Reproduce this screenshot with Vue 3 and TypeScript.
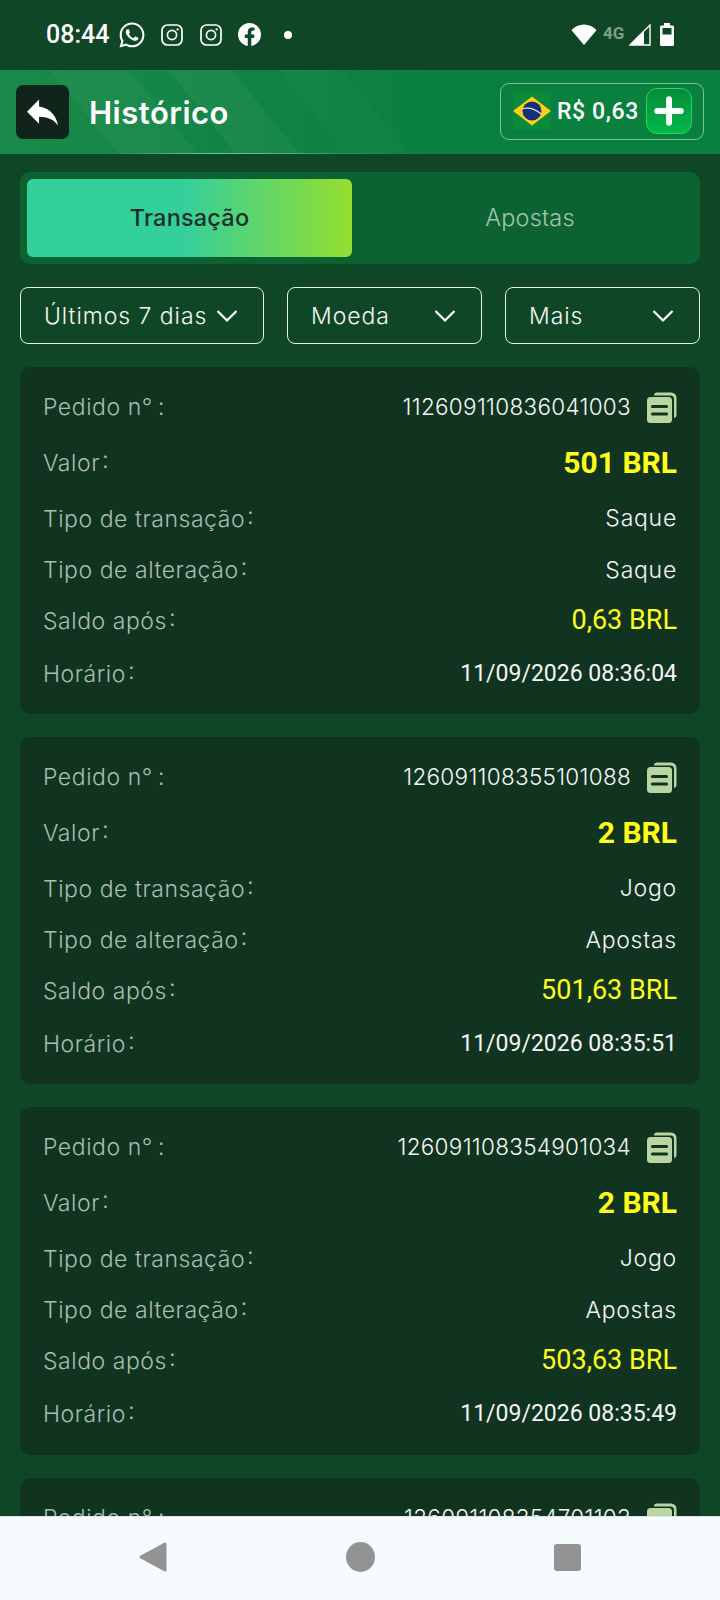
<template>
  <div class="screen">
    <div class="status-bar">
      <span class="clock">08:44</span>
      <svg class="st-icon wa" viewBox="0 0 24 24"><path d="M12.04 2C6.58 2 2.13 6.45 2.13 11.91C2.13 13.66 2.59 15.36 3.45 16.86L2.05 22L7.3 20.62C8.75 21.41 10.38 21.83 12.04 21.83C17.5 21.83 21.95 17.38 21.95 11.92C21.95 9.27 20.92 6.78 19.05 4.91C17.18 3.03 14.69 2 12.04 2M12.05 3.67C14.25 3.67 16.31 4.53 17.87 6.09C19.42 7.65 20.28 9.72 20.28 11.92C20.28 16.46 16.58 20.15 12.04 20.15C10.56 20.15 9.11 19.76 7.85 19L7.55 18.83L4.43 19.65L5.26 16.61L5.06 16.29C4.24 15 3.8 13.47 3.8 11.91C3.81 7.37 7.5 3.67 12.05 3.67M8.53 7.33C8.37 7.33 8.1 7.39 7.87 7.64C7.65 7.89 7 8.5 7 9.71C7 10.93 7.89 12.1 8 12.27C8.14 12.44 9.76 14.94 12.25 16C12.84 16.27 13.3 16.42 13.66 16.53C14.25 16.72 14.79 16.69 15.22 16.63C15.7 16.56 16.68 16.03 16.89 15.45C17.1 14.87 17.1 14.38 17.04 14.27C16.97 14.17 16.81 14.11 16.56 14C16.31 13.86 15.09 13.26 14.87 13.18C14.64 13.1 14.5 13.06 14.31 13.3C14.15 13.55 13.67 14.11 13.53 14.27C13.38 14.44 13.24 14.46 13 14.34C12.74 14.21 11.94 13.95 11 13.11C10.26 12.45 9.77 11.64 9.62 11.39C9.5 11.15 9.61 11 9.73 10.89C9.84 10.78 10 10.6 10.1 10.45C10.23 10.31 10.27 10.2 10.35 10.04C10.43 9.87 10.39 9.73 10.33 9.61C10.27 9.5 9.77 8.26 9.56 7.77C9.36 7.29 9.16 7.35 9 7.34C8.86 7.34 8.7 7.33 8.53 7.33Z" fill="#fff" /></svg>
      <svg v-for="n in 2" :key="n" class="st-icon ig" viewBox="0 0 22 22" fill="none" stroke="#fff" stroke-width="1.7">
        <rect x="1" y="1" width="20" height="20" rx="5.5" />
        <circle cx="11" cy="11" r="4.6" />
        <circle cx="16.6" cy="5.4" r="1.1" fill="#fff" stroke="none" />
      </svg>
      <svg class="st-icon fb" viewBox="2 2 20 20"><path d="M12 2.04C6.5 2.04 2 6.53 2 12.06C2 17.06 5.66 21.21 10.44 21.96V14.96H7.9V12.06H10.44V9.85C10.44 7.34 11.93 5.96 14.22 5.96C15.31 5.96 16.45 6.15 16.45 6.15V8.62H15.19C13.95 8.62 13.56 9.39 13.56 10.18V12.06H16.34L15.89 14.96H13.56V21.96A10 10 0 0 0 22 12.06C22 6.53 17.5 2.04 12 2.04Z" fill="#fff" /></svg>
      <span class="st-dot"></span>
      <div class="st-right">
        <svg class="wifi" viewBox="0 0 26 21"><path d="M13 21L0.5 6.2C3.8 2.6 8.2 0.5 13 0.5s9.2 2.1 12.5 5.7Z" fill="#fff" /></svg>
        <span class="net">4G</span>
        <svg class="signal" viewBox="0 0 22 22"><path d="M21 1V21H1Z" fill="none" stroke="#fff" stroke-width="1.4" /><path d="M15 7.5V21H1.5Z" fill="#fff" /></svg>
        <svg class="battery" viewBox="0 0 14 23"><path d="M4 0h6v2.5h2.5a1.5 1.5 0 0 1 1.5 1.5v17.5a1.5 1.5 0 0 1-1.5 1.5h-11A1.5 1.5 0 0 1 0 21.500V4a1.500 1.500 0 0 1 1.500-1.500H4Z" fill="#fff" /><rect x="2.500" y="5" width="9" height="6.500" fill="#0f4726" /></svg>
      </div>
    </div>

    <header class="top-bar">
      <button class="back-btn" type="button">
        <svg viewBox="3 5 18 15"><path d="M10,9V5L3,12L10,19V14.9C15,14.9 18.5,16.5 21,20C20,15 17,10 10,9Z" fill="#fff" /></svg>
      </button>
      <h1>Histórico</h1>
      <div class="balance">
        <svg class="flag" viewBox="0 0 38 38">
          <rect width="38" height="38" fill="#0a8a3a" />
          <path d="M19 4.500L38 19L19 33.500L0 19Z" fill="#fcd116" />
          <circle cx="19" cy="19" r="9.500" fill="#17307e" />
          <path d="M10 16.500C16 15.500 23 17.500 28 22" fill="none" stroke="#d8e2ea" stroke-width="1.200" />
        </svg>
        <span class="balance-text">R$ 0,63</span>
        <button class="plus-btn" type="button">
          <svg viewBox="0 0 28 28"><path d="M14 3V25M3 14H25" stroke="#fff" stroke-width="5.500" stroke-linecap="round" /></svg>
        </button>
      </div>
    </header>

    <main class="content">
      <div class="tabs">
        <div class="tab active">Transação</div>
        <div class="tab idle">Apostas</div>
      </div>

      <div class="filters">
        <div v-for="f in filters" :key="f.label" class="filter" :class="f.cls">
          <span>{{ f.label }}</span>
          <svg viewBox="0 0 22 14" fill="none"><path d="M1.500 2L11 11.500L20.500 2" stroke="#fff" stroke-width="2.200" /></svg>
        </div>
      </div>

      <div class="list">
        <div v-for="item in transactions" :key="item.order" class="card">
          <div class="row">
            <span class="label">Pedido n°<i class="colon low">:</i></span>
            <span class="value order">
              {{ item.order }}
              <svg class="copy" viewBox="0 0 30 31">
                <path d="M7 3.500A3 3 0 0 1 10 .5h14a5.500 5.500 0 0 1 5.500 5.500v17a3 3 0 0 1-2.500 3V7a3.500 3.500 0 0 0-3.500-3.500Z" fill="#b9d6a2" />
                <rect x="0" y="5" width="25" height="26" rx="3.500" fill="#b9d6a2" />
                <path d="M5.500 14.500h14M5.500 22h14" stroke="#103420" stroke-width="3.200" stroke-linecap="round" />
              </svg>
            </span>
          </div>
          <div class="row">
            <span class="label">Valor<i class="colon">:</i></span>
            <span class="amount">{{ item.amount }}</span>
          </div>
          <div class="row">
            <span class="label">Tipo de transação<i class="colon">:</i></span>
            <span class="value">{{ item.type }}</span>
          </div>
          <div class="row">
            <span class="label">Tipo de alteração<i class="colon">:</i></span>
            <span class="value">{{ item.change }}</span>
          </div>
          <div class="row">
            <span class="label">Saldo após<i class="colon">:</i></span>
            <span class="balance-after">{{ item.after }}</span>
          </div>
          <div class="row">
            <span class="label">Horário<i class="colon">:</i></span>
            <span class="time">{{ item.time }}</span>
          </div>
        </div>
      </div>
    </main>

    <nav class="nav-bar">
      <svg class="nav-back" viewBox="0 0 28 30"><path d="M26 2V28L2 15Z" fill="#939393" stroke="#939393" stroke-width="3" stroke-linejoin="round" /></svg>
      <span class="nav-home"></span>
      <span class="nav-recent"></span>
    </nav>
  </div>
</template>

<script setup lang="ts">
const filters = [
  { label: 'Últimos 7 dias', cls: 'f-date' },
  { label: 'Moeda', cls: 'f-coin' },
  { label: 'Mais', cls: 'f-more' }
]

const transactions = [
  { order: '112609110836041003', amount: '501 BRL', type: 'Saque', change: 'Saque', after: '0,63 BRL', time: '11/09/2026 08:36:04' },
  { order: '126091108355101088', amount: '2 BRL', type: 'Jogo', change: 'Apostas', after: '501,63 BRL', time: '11/09/2026 08:35:51' },
  { order: '126091108354901034', amount: '2 BRL', type: 'Jogo', change: 'Apostas', after: '503,63 BRL', time: '11/09/2026 08:35:49' },
  { order: '126091108354701103', amount: '2 BRL', type: 'Jogo', change: 'Apostas', after: '505,63 BRL', time: '11/09/2026 08:35:47' }
]
</script>

<style>
html, body {
  margin: 0;
  background: #0f4726;
}
</style>

<style scoped>
.screen {
  width: 720px;
  height: 1600px;
  display: flex;
  flex-direction: column;
  overflow: hidden;
  background: #0f4726;
  font-family: Inter, "Noto Sans", sans-serif;
}

.status-bar {
  height: 70px;
  flex: none;
  display: flex;
  align-items: center;
  padding: 0 46px 1px;
  box-sizing: border-box;
  color: #fff;
}

.clock {
  font: 500 25px Roboto, sans-serif;
  width: 64px;
}

.st-icon {
  display: block;
}

.wa {
  width: 30px;
  height: 30px;
  margin-left: 7px;
}

.ig {
  width: 22px;
  height: 22px;
  margin-left: 14px;
}

.ig + .ig {
  margin-left: 17px;
}

.fb {
  width: 23px;
  height: 23px;
  margin-left: 16px;
}

.st-dot {
  width: 8px;
  height: 8px;
  border-radius: 50%;
  background: #fff;
  margin-left: 23px;
}

.st-right {
  margin-left: auto;
  display: flex;
  align-items: center;
}

.wifi {
  width: 26px;
  height: 21px;
  margin-top: -1px;
}

.net {
  font: 700 17px Roboto, sans-serif;
  color: #7f9f8c;
  margin-left: 6px;
  width: 22px;
  margin-top: -3px;
}

.signal {
  width: 22px;
  height: 22px;
  margin-left: 4px;
}

.battery {
  width: 14px;
  height: 23px;
  margin-left: 9px;
}

.top-bar {
  height: 84px;
  flex: none;
  display: flex;
  align-items: center;
  padding: 0 16px;
  box-sizing: border-box;
  background:
    linear-gradient(90deg, transparent 15%, rgba(140, 230, 180, 0.7) 30%, transparent 55%) bottom / 100% 1px no-repeat,
    linear-gradient(51deg, transparent 0 15%, rgba(255, 255, 255, 0.035) 15% 25%, transparent 25% 30%, rgba(255, 255, 255, 0.04) 30% 38%, transparent 38% 44%, rgba(255, 255, 255, 0.02) 44% 52%, transparent 52%),
    linear-gradient(90deg, #1a8a4a 0%, #0a803f 60%, #0a803f 100%);
}

.back-btn {
  width: 53px;
  height: 54px;
  flex: none;
  padding: 0;
  border: none;
  border-radius: 7px;
  background: #10241a;
  display: flex;
  align-items: center;
  justify-content: center;
}

.back-btn svg {
  width: 31px;
  height: 29px;
}

.top-bar h1 {
  margin: 0 0 0 20px;
  color: #fff;
  font-size: 31px;
  font-weight: 600;
  letter-spacing: 0.5px;
}

.balance {
  margin-left: auto;
  width: 204px;
  height: 57px;
  margin-top: -2px;
  box-sizing: border-box;
  border: 1px solid rgba(190, 240, 210, 0.6);
  border-radius: 9px;
  display: flex;
  align-items: center;
  padding-left: 12px;
}

.flag {
  width: 38px;
  height: 38px;
  flex: none;
}

.balance-text {
  margin-left: 6px;
  color: #fff;
  font: 500 23px Roboto, sans-serif;
  letter-spacing: 0.6px;
  white-space: nowrap;
}

.plus-btn {
  width: 46px;
  height: 46px;
  flex: none;
  margin-left: 7px;
  padding: 0;
  border: 1px solid #22d665;
  border-radius: 11px;
  background: linear-gradient(180deg, #068a38, #04b94c);
  display: flex;
  align-items: center;
  justify-content: center;
}

.plus-btn svg {
  width: 30px;
  height: 30px;
}

.content {
  flex: 1;
  min-height: 0;
  overflow: hidden;
  padding: 18px 20px 0;
}

.tabs {
  height: 92px;
  padding: 7px;
  box-sizing: border-box;
  display: grid;
  grid-template-columns: 325px 1fr;
  border-radius: 10px;
  background: #0c6331;
}

.tab {
  display: flex;
  align-items: center;
  justify-content: center;
  font-size: 23.500px;
  font-weight: 350;
  color: #a2c4ae;
  letter-spacing: 0.200px;
  padding-bottom: 1px;
}

.tab.idle {
  padding-left: 15px;
}

.tab.active {
  border-radius: 6px;
  background: linear-gradient(90deg, #34d09c 0%, #34d09c 48%, #96de2e 100%);
  color: #1d2f2a;
  font-weight: 500;
}

.filters {
  display: flex;
  margin-top: 23px;
  gap: 23px;
}

.filter {
  height: 57px;
  box-sizing: border-box;
  border: 1px solid #e8f0ea;
  border-radius: 8px;
  display: flex;
  align-items: center;
  justify-content: space-between;
  padding: 0 25px 0 23px;
  color: #f4f6f4;
  font-size: 23px;
  font-weight: 350;
  letter-spacing: 0.950px;
}

.filter svg {
  width: 22px;
  height: 14px;
  flex: none;
}

.f-date {
  width: 244px;
}

.f-coin {
  width: 195px;
}

.f-more {
  width: 195px;
}

.list {
  margin-top: 23px;
  display: flex;
  flex-direction: column;
  gap: 23px;
}

.card {
  height: 347.200px;
  flex: none;
  box-sizing: border-box;
  padding: 12px 23px 14px;
  display: grid;
  grid-template-rows: 55px 56px 56px 47px 54px 53px;
  border-radius: 10px;
  background: #103420;
}

.row {
  display: flex;
  align-items: center;
  justify-content: space-between;
}

.label {
  color: #a9bdb0;
  font-size: 23px;
  font-weight: 350;
  letter-spacing: 0.550px;
}

.colon {
  font-style: normal;
  font-size: 24px;
  margin-left: 2px;
  position: relative;
  top: -3px;
}

.colon.low {
  margin-left: 5px;
  top: 0;
}

.value {
  color: #f4f6f4;
  font-size: 23px;
  font-weight: 350;
  letter-spacing: 0.750px;
}

.order {
  display: flex;
  align-items: center;
  letter-spacing: 0.300px;
  font-size: 22.500px;
}

.copy {
  width: 30px;
  height: 31px;
  margin-left: 16px;
  margin-top: 2px;
}

.amount {
  color: #ffff1a;
  font: 700 30px Roboto, sans-serif;
}

.balance-after {
  color: #ffff1a;
  font: 400 27px Roboto, sans-serif;
}

.time {
  color: #f4f6f4;
  font: 400 23px Roboto, sans-serif;
}

.nav-bar {
  height: 84px;
  flex: none;
  box-sizing: border-box;
  border-top: 1px solid #dfe8e8;
  background: #f6fbfe;
  display: flex;
  align-items: center;
  padding: 0 0 3px 139px;
}

.nav-back {
  width: 28px;
  height: 30px;
}

.nav-home {
  width: 29px;
  height: 30px;
  margin-left: 179px;
  border-radius: 50%;
  background: #939393;
}

.nav-recent {
  width: 27px;
  height: 27px;
  margin-left: 179px;
  border-radius: 3px;
  background: #939393;
}
</style>
